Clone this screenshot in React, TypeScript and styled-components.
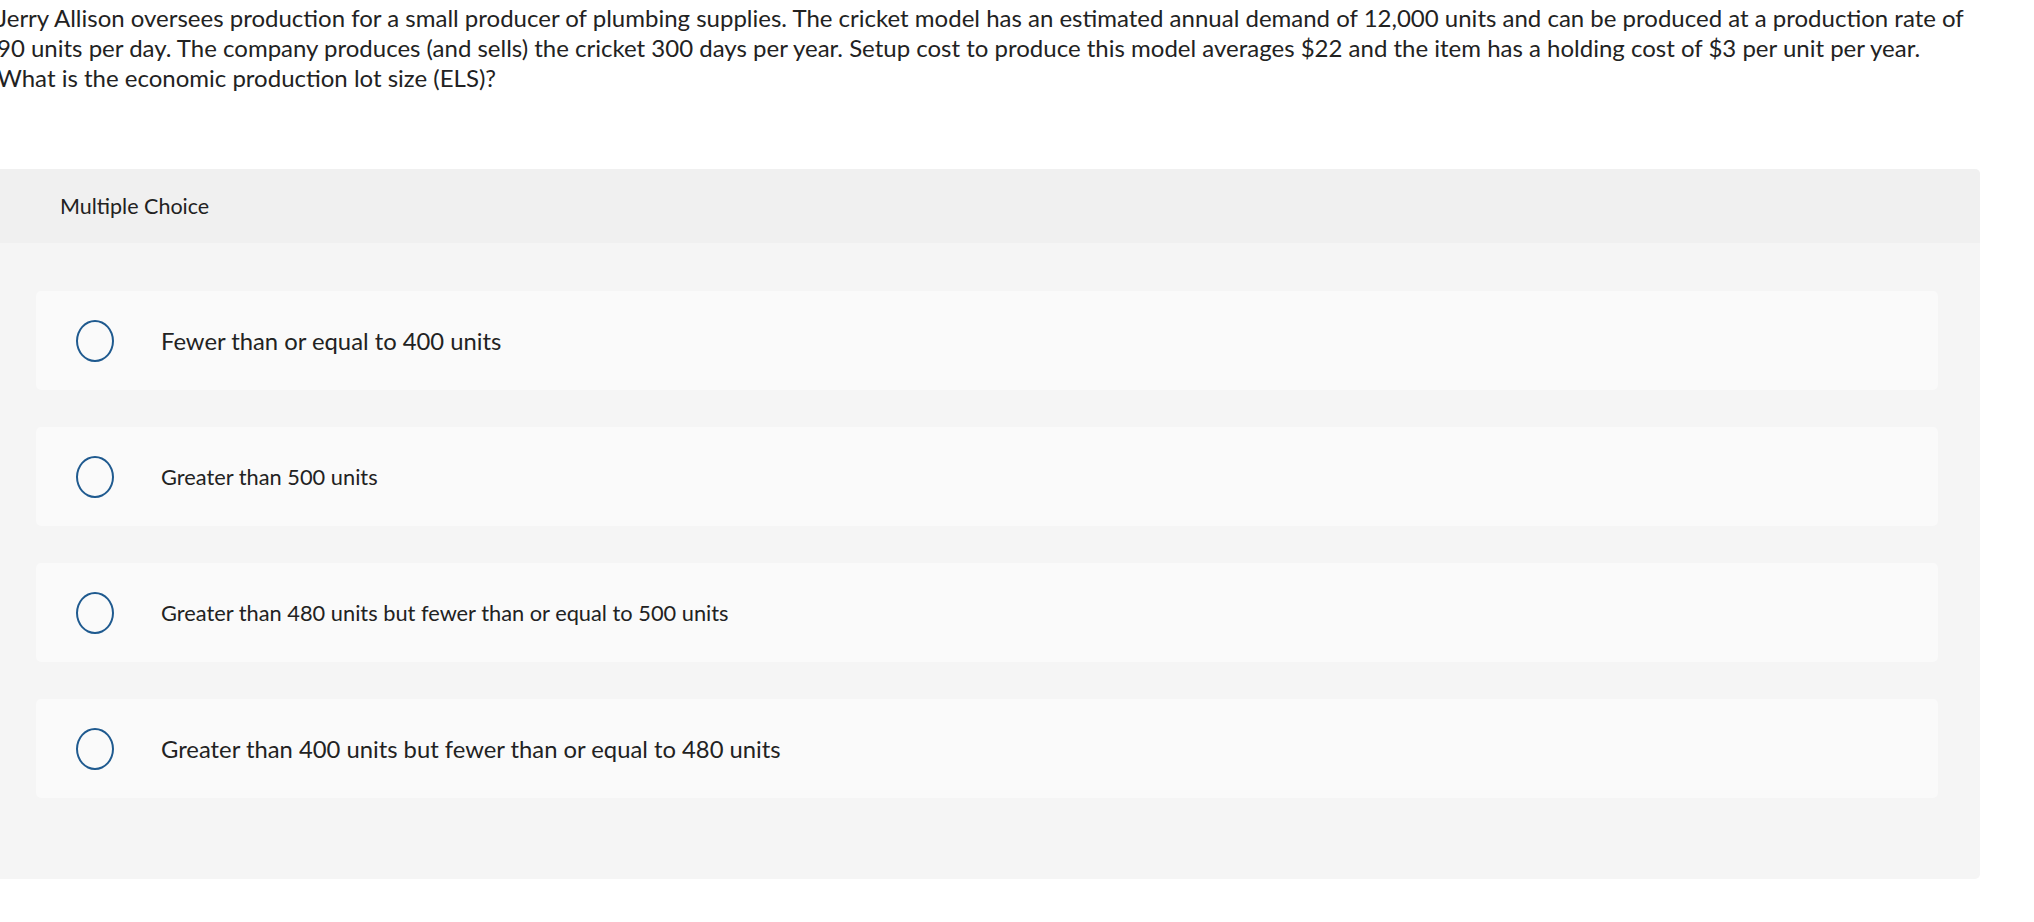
import styled, { createGlobalStyle } from "styled-components"

const GlobalStyle = createGlobalStyle`
  html, body {
    margin: 0;
    padding: 0;
    background: #fff;
    overflow: hidden;
  }
  body {
    font-family: "Lato", "Liberation Sans", sans-serif;
    color: #222;
  }
`

type Choice = {
  text: string
  small?: boolean
}

const choices: Choice[] = [
  { text: "Fewer than or equal to 400 units" },
  { text: "Greater than 500 units", small: true },
  { text: "Greater than 480 units but fewer than or equal to 500 units", small: true },
  { text: "Greater than 400 units but fewer than or equal to 480 units" },
]

const App = () => {
  return (
    <Page>
      <GlobalStyle />
      <Question>
        Jerry Allison oversees production for a small producer of plumbing supplies. The cricket model has an
        estimated annual demand of 12,000 units and can be produced at a production rate of 90 units per day. The
        company produces (and sells) the cricket 300 days per year. Setup cost to produce this model averages $22
        and the item has a holding cost of $3 per unit per year. What is the economic production lot size (ELS)?
      </Question>
      <Panel>
        <Header>Multiple Choice</Header>
        <Body>
          {choices.map(choice => (
            <Option key={choice.text}>
              <Radio />
              <Label small={choice.small}>{choice.text}</Label>
            </Option>
          ))}
        </Body>
      </Panel>
    </Page>
  )
}

export default App

const Page = styled.div`
  width: 2034px;
  height: 922px;
`

const Question = styled.p`
  margin: 0 0 0 -3px;
  padding-top: 3px;
  width: 1975px;
  font-size: 24px;
  line-height: 30px;
  color: #222;
`

const Panel = styled.section`
  margin-top: 76px;
  width: 1980px;
  border-radius: 0 5px 5px 0;
  overflow: hidden;
  background: #f5f5f5;
`

const Header = styled.div`
  height: 74px;
  display: flex;
  align-items: center;
  padding-left: 60px;
  background: #f0f0f0;
  font-size: 21.5px;
  color: #222;
`

const Body = styled.div`
  display: flex;
  flex-direction: column;
  gap: 37px;
  padding: 48px 42px 81px 36px;
`

const Option = styled.div`
  height: 99px;
  display: flex;
  align-items: center;
  background: #fafafa;
  border-radius: 5px;
`

const Radio = styled.span`
  width: 38px;
  height: 42px;
  box-sizing: border-box;
  margin-left: 40px;
  margin-right: 47px;
  border: 2px solid #1f5a8f;
  border-radius: 50%;
  flex-shrink: 0;
`

type LabelProps = {
  small?: boolean
}

const Label = styled.span<LabelProps>`
  font-size: ${p => (p.small ? "21.8px" : "23.8px")};
  color: #222;
`
